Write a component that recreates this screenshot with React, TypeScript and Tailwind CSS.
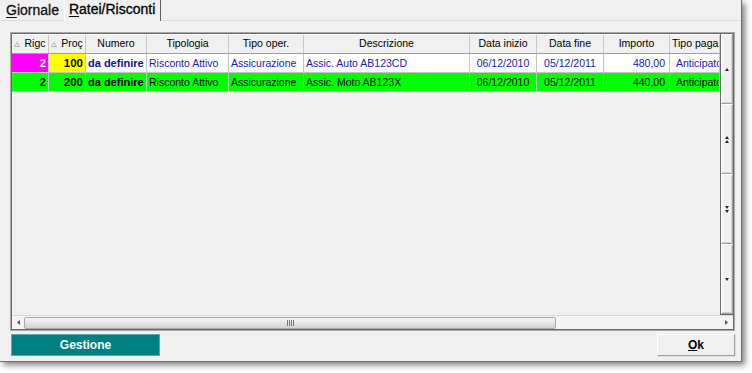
const COLUMNS = [
  { key: 'rig', label: 'Rigc', w: 37, sort: true, align: 'text-right' },
  { key: 'prog', label: 'Proç', w: 37, sort: true, align: 'text-right' },
  { key: 'num', label: 'Numero', w: 61, align: 'text-left' },
  { key: 'tip', label: 'Tipologia', w: 82, align: 'text-left' },
  { key: 'oper', label: 'Tipo oper.', w: 75, align: 'text-left' },
  { key: 'desc', label: 'Descrizione', w: 166, align: 'text-left' },
  { key: 'ini', label: 'Data inizio', w: 67, align: 'text-center' },
  { key: 'fine', label: 'Data fine', w: 67, align: 'text-center' },
  { key: 'imp', label: 'Importo', w: 66, align: 'text-right' },
  { key: 'pag', label: 'Tipo paga', w: 50, align: 'text-left' },
];

const ROWS = [
  {
    rig: '2',
    prog: '100',
    num: 'da definire',
    tip: 'Risconto Attivo',
    oper: 'Assicurazione',
    desc: 'Assic. Auto AB123CD',
    ini: '06/12/2010',
    fine: '05/12/2011',
    imp: '480,00',
    pag: 'Anticipato',
    green: false,
  },
  {
    rig: '2',
    prog: '200',
    num: 'da definire',
    tip: 'Risconto Attivo',
    oper: 'Assicurazione',
    desc: 'Assic. Moto AB123X',
    ini: '06/12/2010',
    fine: '05/12/2011',
    imp: '440,00',
    pag: 'Anticipato',
    green: true,
  },
];

function SortArrow() {
  return (
    <svg width="6" height="5" viewBox="0 0 6 5" className="shrink-0">
      <path d="M3 0.5 L5.5 4.5 L0.5 4.5 Z" fill="none" stroke="#b4b4b4" strokeWidth="1" />
    </svg>
  );
}

function Tri({ dir, double }: { dir: 'up' | 'down'; double?: boolean }) {
  const one = dir === 'up' ? 'M0 3 L2 0 L4 3 Z' : 'M0 0 L4 0 L2 3 Z';
  return (
    <svg width="4" height={double ? 7 : 3} viewBox={`0 0 4 ${double ? 7 : 3}`}>
      <path d={one} fill="#222" />
      {double && (
        <path d={dir === 'up' ? 'M0 7 L2 4 L4 7 Z' : 'M0 4 L4 4 L2 7 Z'} fill="#222" />
      )}
    </svg>
  );
}

function ScrollBtn({ children }: { children: React.ReactNode }) {
  return (
    <div className="flex-1 flex items-center justify-center bg-[#f0f0f0] border border-t-white border-l-white border-r-[#a0a0a0] border-b-[#a0a0a0] shadow-[inset_-1px_-1px_0_#d4d4d4]">
      {children}
    </div>
  );
}

function Cell({ row, col }: { row: (typeof ROWS)[number]; col: (typeof COLUMNS)[number] }) {
  const value = row[col.key as keyof typeof row] as string;
  let bg = row.green ? 'bg-[#00ff00]' : 'bg-white';
  let color = row.green ? 'text-black' : 'text-[#1c1ca8]';
  let weight = 'font-normal text-[10.5px]';
  if (col.key === 'rig') {
    weight = 'font-bold text-[11.5px]';
    if (!row.green) {
      bg = 'bg-[#ff00ff]';
      color = 'text-white';
    }
  }
  if (col.key === 'prog') {
    weight = 'font-bold text-[11.5px]';
    if (!row.green) {
      bg = 'bg-[#ffff00]';
      color = 'text-black';
    }
  }
  if (col.key === 'num') {
    weight = 'font-bold text-[11px]';
    if (!row.green) color = 'text-[#10108a]';
  }
  const pad = col.key === 'pag' ? 'pl-[6px]' : col.key === 'imp' ? 'pr-[4px]' : 'px-[2px]';
  return (
    <div
      style={{ width: col.w }}
      className={`shrink-0 h-full border-r border-[#c4c4c4] overflow-hidden whitespace-nowrap leading-[18px] ${bg} ${color} ${weight} ${col.align} ${pad}`}
    >
      {value}
    </div>
  );
}

export default function App() {
  return (
    <div className="w-[752px] h-[373px] bg-white font-['Liberation_Sans',Arial,sans-serif] text-black">
      <div className="w-[742px] h-[362px] bg-[#f0f0f0] border-r border-b border-[#707070] shadow-[3px_3px_6px_rgba(0,0,0,0.5)] flex flex-col">
        {/* tab strip */}
        <div className="h-[21px] flex items-end border-b border-[#dcdcdc] pl-[4px]">
          <div className="h-[18px] px-[2px] text-[14px] leading-[17px] text-[#111] [-webkit-text-stroke:0.3px_#111]">
            <span className="underline underline-offset-2">G</span>iornale
          </div>
          <div className="h-[21px] ml-[3px] pl-[4px] pr-[5px] border-l border-white border-r border-r-[#606060] text-[14px] leading-[19px] bg-[#f0f0f0] -mb-px [-webkit-text-stroke:0.3px_#000]">
            <span className="underline underline-offset-2">R</span>atei/Risconti
          </div>
        </div>

        <div className="flex flex-col px-[10px] pt-[11px]">
          {/* grid */}
          <div className="w-[725px] h-[299px] border border-[#a8a8a8]">
            <div className="w-full h-full border border-[#6a6a6a] flex flex-col">
              <div className="flex h-[281px]">
                <div className="w-[708px] flex flex-col overflow-hidden">
                  {/* header */}
                  <div className="flex h-[20px] bg-[#f0f0f0] border-b border-[#a0a0a0] border-t border-t-white">
                    {COLUMNS.map((c) => (
                      <div
                        key={c.key}
                        style={{ width: c.w }}
                        className={`shrink-0 h-full border-r border-[#c8c8c8] flex items-center gap-[4px] text-[10.5px] whitespace-nowrap overflow-hidden px-[2px] ${
                          c.key === 'pag' ? 'justify-start' : 'justify-center'
                        }`}
                      >
                        {c.sort && <SortArrow />}
                        <span>{c.label}</span>
                      </div>
                    ))}
                  </div>
                  {ROWS.map((r, i) => (
                    <div key={i} className="flex h-[19px] border-b border-[#c4c4c4]">
                      {COLUMNS.map((c) => (
                        <Cell key={c.key} row={r} col={c} />
                      ))}
                    </div>
                  ))}
                </div>
                {/* vertical scrollbar */}
                <div className="w-[13px] flex flex-col border-l border-[#6a6a6a] border-b border-b-[#6a6a6a]">
                  <ScrollBtn>
                    <Tri dir="up" />
                  </ScrollBtn>
                  <ScrollBtn>
                    <Tri dir="up" double />
                  </ScrollBtn>
                  <ScrollBtn>
                    <Tri dir="down" double />
                  </ScrollBtn>
                  <ScrollBtn>
                    <Tri dir="down" />
                  </ScrollBtn>
                </div>
              </div>
              {/* horizontal scrollbar */}
              <div className="flex-1 flex items-center bg-[#f4f4f4] border-t border-[#d8d8d8]">
                <div className="w-[12px] flex justify-center">
                  <svg width="3" height="5" viewBox="0 0 3 5">
                    <path d="M3 0 L0 2.5 L3 5 Z" fill="#555" />
                  </svg>
                </div>
                <div className="w-[532px] h-[12px] rounded-[2px] border border-[#a8a8a8] bg-gradient-to-b from-[#f6f6f6] via-[#e6e6e6] to-[#d2d2d2] flex items-center justify-center">
                  <svg width="7" height="6" viewBox="0 0 7 6">
                    <path d="M0.5 0 V6 M2.5 0 V6 M4.5 0 V6 M6.5 0 V6" stroke="#777" strokeWidth="1" />
                  </svg>
                </div>
                <div className="flex-1" />
                <div className="w-[14px] flex justify-center">
                  <svg width="3" height="5" viewBox="0 0 3 5">
                    <path d="M0 0 L3 2.5 L0 5 Z" fill="#555" />
                  </svg>
                </div>
              </div>
            </div>
          </div>

          {/* buttons */}
          <div className="flex justify-between mt-[3px] w-[725px]">
            <button className="w-[149px] h-[22px] ml-px bg-[#008080] border border-[#5fa8a8] text-white text-[12px] font-bold">
              Gestione
            </button>
            <button className="w-[78px] h-[22px] bg-[#f0f0f0] border border-t-white border-l-white border-r-[#a0a0a0] border-b-[#a0a0a0] shadow-[1px_1px_0_#e0e0e0] text-[12px] font-bold">
              <span className="underline">O</span>k
            </button>
          </div>
        </div>
      </div>
    </div>
  );
}
